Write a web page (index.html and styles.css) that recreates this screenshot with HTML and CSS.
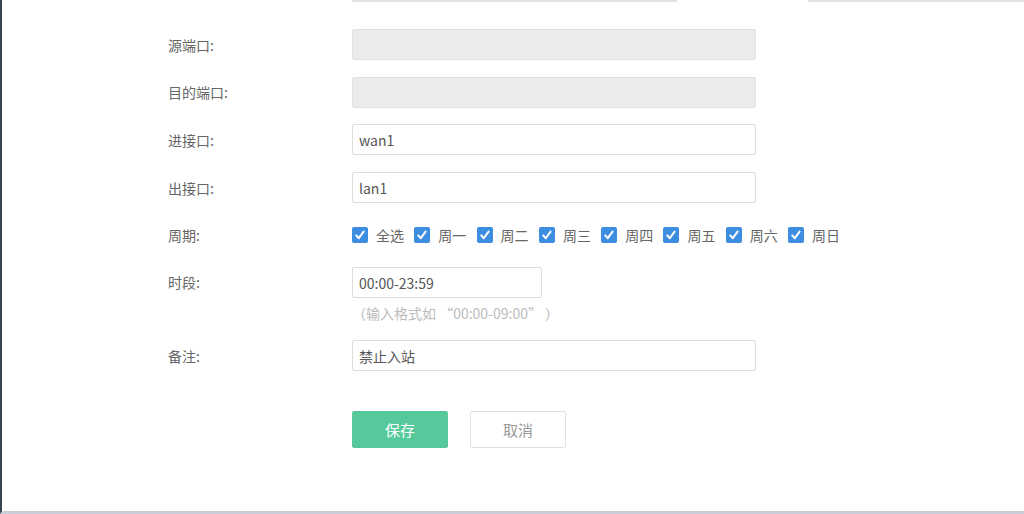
FILE: index.html
```html
<!DOCTYPE html>
<html lang="zh-CN">

<head>
    <meta charset="UTF-8">
    <meta name="viewport" content="width=device-width, initial-scale=1.0">
    <title>访问控制规则</title>
    <link rel="stylesheet" href="styles.css">
</head>

<body>
    <div class="page">
        <div class="prev-row">
            <span class="edge edge-a"></span>
            <span class="edge edge-b"></span>
        </div>
        <form class="rule-form">
            <div class="row">
                <label class="label">源端口:</label>
                <input class="field disabled" type="text" disabled>
            </div>
            <div class="row">
                <label class="label">目的端口:</label>
                <input class="field disabled" type="text" disabled>
            </div>
            <div class="row">
                <label class="label">进接口:</label>
                <input class="field" type="text" value="wan1">
            </div>
            <div class="row">
                <label class="label">出接口:</label>
                <input class="field" type="text" value="lan1">
            </div>
            <div class="row row-days">
                <label class="label">周期:</label>
                <div class="days">
                    <span class="day"><i class="check"><svg viewBox="0 0 16 16"><path d="M4.2 8.4 L6.8 11.2 L11.6 4.6" /></svg></i>全选</span>
                    <span class="day"><i class="check"><svg viewBox="0 0 16 16"><path d="M4.2 8.4 L6.8 11.2 L11.6 4.6" /></svg></i>周一</span>
                    <span class="day"><i class="check"><svg viewBox="0 0 16 16"><path d="M4.2 8.4 L6.8 11.2 L11.6 4.6" /></svg></i>周二</span>
                    <span class="day"><i class="check"><svg viewBox="0 0 16 16"><path d="M4.2 8.4 L6.8 11.2 L11.6 4.6" /></svg></i>周三</span>
                    <span class="day"><i class="check"><svg viewBox="0 0 16 16"><path d="M4.2 8.4 L6.8 11.2 L11.6 4.6" /></svg></i>周四</span>
                    <span class="day"><i class="check"><svg viewBox="0 0 16 16"><path d="M4.2 8.4 L6.8 11.2 L11.6 4.6" /></svg></i>周五</span>
                    <span class="day"><i class="check"><svg viewBox="0 0 16 16"><path d="M4.2 8.4 L6.8 11.2 L11.6 4.6" /></svg></i>周六</span>
                    <span class="day"><i class="check"><svg viewBox="0 0 16 16"><path d="M4.2 8.4 L6.8 11.2 L11.6 4.6" /></svg></i>周日</span>
                </div>
            </div>
            <div class="row row-time">
                <label class="label">时段:</label>
                <div class="time-wrap">
                    <input class="field short" type="text" value="00:00-23:59">
                    <div class="hint">（输入格式如 “00:00-09:00” ）</div>
                </div>
            </div>
            <div class="row">
                <label class="label">备注:</label>
                <input class="field" type="text" value="禁止入站">
            </div>
            <div class="actions">
                <button type="button" class="btn btn-save">保存</button>
                <button type="button" class="btn btn-cancel">取消</button>
            </div>
        </form>
    </div>
</body>

</html>
```

FILE: styles.css
```css
body {
    margin: 0px;
    font-family: "Noto Sans CJK SC", "Open Sans", sans-serif;
    background-color: #fff;
}

.page {
    box-sizing: border-box;
    height: 514px;
    border-left: 2px solid #36424f;
    border-bottom: 3px solid #c9ced8;
    overflow: hidden;
}

/* bottom edges of the row scrolled above */
.prev-row {
    display: flex;
    height: 2px;
    padding-left: 350px;
}

.prev-row .edge {
    display: block;
    height: 2px;
    background-color: #e2e2e2;
}

.prev-row .edge-a {
    width: 325px;
}

.prev-row .edge-b {
    flex: 1;
    margin-left: 131px;
}

.rule-form {
    padding: 27px 0px 0px 166px;
}

.row {
    display: flex;
    align-items: center;
    margin-bottom: 16.7px;
}

.label {
    width: 184px;
    font-size: 14px;
    color: #666;
}

.field {
    box-sizing: border-box;
    width: 404px;
    height: 31px;
    padding: 0px 6px;
    border: 1px solid #ddd;
    border-radius: 2px;
    outline: none;
    font-family: inherit;
    font-size: 14px;
    color: #555;
    background-color: #fff;
}

.field.disabled {
    background-color: #ebebeb;
    border-color: #e0e0e0;
}

.field.short {
    width: 190px;
}

.row-days {
    height: 31px;
}

.days {
    display: flex;
    align-items: center;
}

.day {
    display: flex;
    align-items: center;
    margin-right: 10.3px;
    font-size: 14px;
    color: #666;
}

.check {
    display: block;
    width: 16px;
    height: 16px;
    margin-right: 8px;
    border-radius: 2px;
    background-color: #3d8ee0;
}

.check svg {
    display: block;
    width: 16px;
    height: 16px;
}

.check path {
    fill: none;
    stroke: #fff;
    stroke-width: 2;
    stroke-linecap: round;
    stroke-linejoin: round;
}

.row-time {
    align-items: flex-start;
    margin-bottom: 17px;
}

.row-time .label {
    line-height: 31px;
}

.hint {
    margin-top: 5px;
    line-height: 20px;
    font-size: 14px;
    color: #bbb;
}

.actions {
    display: flex;
    gap: 22px;
    padding-left: 184px;
    margin-top: 40px;
}

.btn {
    width: 96px;
    height: 37px;
    border-radius: 2px;
    font-family: inherit;
    font-size: 15px;
    cursor: pointer;
}

.btn-save {
    border: 1px solid #55c99c;
    background-color: #55c99c;
    color: #fff;
}

.btn-cancel {
    border: 1px solid #e0e0e0;
    background-color: #fff;
    color: #999;
}
```
